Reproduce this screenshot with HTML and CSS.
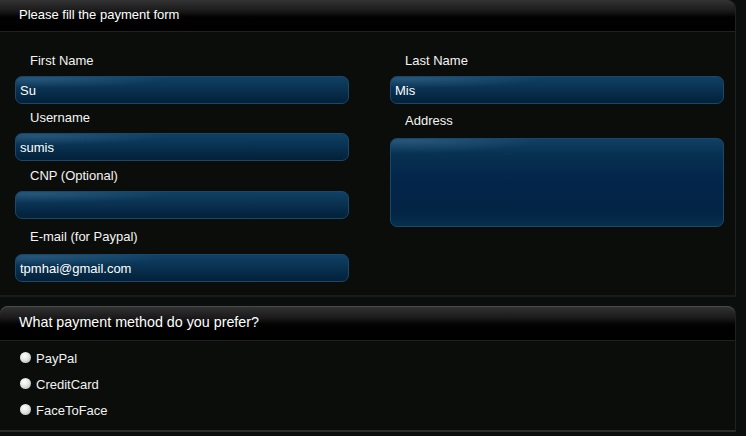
FILE: index.html
```html
<!DOCTYPE html>
<html>
<head>
<meta charset="utf-8">
<link rel="stylesheet" href="styles.css">
</head>
<body>
<div class="page">
  <section class="panel panel-first">
    <div class="panel-head">Please fill the payment form</div>
    <div class="panel-body form-grid">
      <div class="col">
        <div class="field">
          <label class="lbl">First Name</label>
          <div class="inp">Su</div>
        </div>
        <div class="field">
          <label class="lbl">Username</label>
          <div class="inp">sumis</div>
        </div>
        <div class="field field-cnp">
          <label class="lbl">CNP (Optional)</label>
          <div class="inp"></div>
        </div>
        <div class="field field-email">
          <label class="lbl">E-mail (for Paypal)</label>
          <div class="inp">tpmhai@gmail.com</div>
        </div>
      </div>
      <div class="col">
        <div class="field">
          <label class="lbl">Last Name</label>
          <div class="inp">Mis</div>
        </div>
        <div class="field">
          <label class="lbl lbl-addr">Address</label>
          <div class="inp area"></div>
        </div>
      </div>
    </div>
  </section>
  <section class="panel panel-second">
    <div class="panel-head head-lg">What payment method do you prefer?</div>
    <div class="panel-body radios">
      <label class="opt"><input type="radio" name="pm"><span>PayPal</span></label>
      <label class="opt"><input type="radio" name="pm"><span>CreditCard</span></label>
      <label class="opt"><input type="radio" name="pm"><span>FaceToFace</span></label>
    </div>
  </section>
</div>
</body>
</html>
```
FILE: styles.css
```css
html, body {
  margin: 0;
  padding: 0;
  background: #0a0e0d;
  font-family: "Liberation Sans", Arial, sans-serif;
  color: #f2f2f2;
}
.page {
  width: 736px;
  display: flex;
  flex-direction: column;
  gap: 9px;
}
.panel {
  background: #0b0d0b;
  border-radius: 8px 8px 0 0;
  border-right: 1px solid #1e2220;
  border-bottom: 2px solid #2a2d2c;
}
.panel-first {
  border-radius: 0 8px 0 0;
  border-bottom-color: #181b1a;
}
.panel-head {
  height: 31px;
  line-height: 30px;
  padding-left: 19px;
  font-size: 13px;
  color: #ffffff;
  background: linear-gradient(to bottom, #333333 0%, #1a1a1a 35%, #020202 55%, #000000 100%);
  border-bottom: 1px solid #1f2220;
  border-radius: inherit;
  box-shadow: inset 0 1px 0 #4a4a4a;
}
.panel-first .panel-head {
  box-shadow: none;
}
.head-lg {
  height: 34px;
  line-height: 33px;
  font-size: 14.3px;
}
.form-grid {
  display: grid;
  grid-template-columns: 334px 334px;
  column-gap: 41px;
  padding: 15px 0 13px 15px;
}
.col {
  display: flex;
  flex-direction: column;
}
.lbl {
  display: block;
  font-size: 13px;
  line-height: 16px;
  padding: 6px 0 7px 15px;
  color: #f4f4f4;
}
.field + .field .lbl {
  padding-top: 6px;
}
.field-cnp .lbl {
  padding-top: 7px !important;
}
.field-email .lbl {
  padding-top: 10px !important;
  padding-bottom: 9px;
}
.lbl-addr {
  padding-top: 9px !important;
  padding-bottom: 9px;
}
.inp {
  box-sizing: border-box;
  height: 28px;
  border: 1px solid #1b4868;
  border-radius: 7px;
  padding: 2px 0 0 4px;
  font-size: 13px;
  line-height: 24px;
  color: #ffffff;
  background:
    radial-gradient(ellipse 130px 9px at 20px 2px, rgba(120,170,210,0.22), rgba(120,170,210,0) 100%),
    linear-gradient(to bottom, #0f4064 0%, #0a3454 40%, #052844 75%, #03213a 100%);
}
.area {
  height: 89px;
  background:
    radial-gradient(ellipse 130px 12px at 20px 2px, rgba(120,170,210,0.22), rgba(120,170,210,0) 100%),
    linear-gradient(to bottom, #0f4064 0%, #072f4f 20%, #03254a 50%, #032444 85%, #06304e 100%);
}
.radios {
  display: flex;
  flex-direction: column;
  gap: 10px;
  padding: 10px 0 11px 20px;
}
.opt {
  display: flex;
  align-items: center;
  gap: 5px;
  font-size: 13px;
  line-height: 16px;
  color: #f2f2f2;
}
.opt input {
  appearance: none;
  -webkit-appearance: none;
  margin: 0;
  width: 11px;
  height: 11px;
  border-radius: 50%;
  background: radial-gradient(circle at 40% 35%, #ffffff 0%, #e4e4e4 45%, #a8a8a8 100%);
  position: relative;
  top: -2px;
}
```
